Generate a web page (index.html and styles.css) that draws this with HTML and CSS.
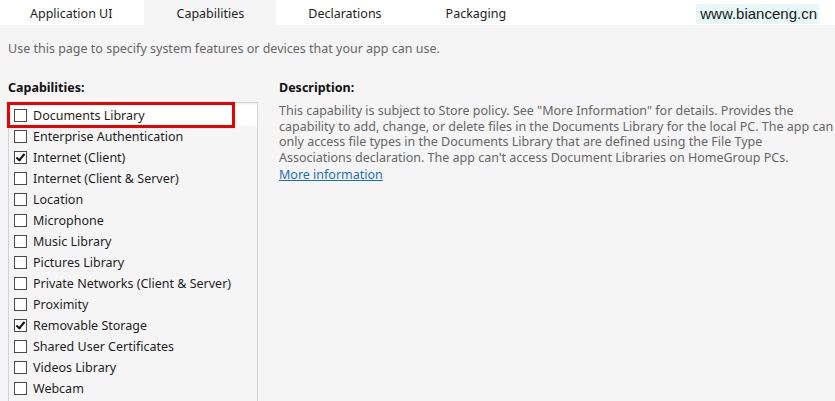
FILE: index.html
```html
<!DOCTYPE html>
<html lang="en">
<head>
    <meta charset="UTF-8">
    <title>Package.appxmanifest - Capabilities</title>
    <link rel="stylesheet" href="styles.css">
</head>
<body>

    <!-- Manifest designer tabs -->
    <div class="tabs">
        <div class="tab">Application UI</div>
        <div class="tab active">Capabilities</div>
        <div class="tab">Declarations</div>
        <div class="tab">Packaging</div>
        <div class="watermark">www.bianceng.cn</div>
    </div>

    <p class="intro">Use this page to specify system features or devices that your app can use.</p>

    <div class="panes">
        <div class="caps">
            <div class="heading">Capabilities:</div>
            <div class="cap-list">
                <div class="cap selected"><span class="check"></span>Documents Library</div>
                <div class="cap"><span class="check"></span>Enterprise Authentication</div>
                <div class="cap"><span class="check on"></span>Internet (Client)</div>
                <div class="cap"><span class="check"></span>Internet (Client &amp; Server)</div>
                <div class="cap"><span class="check"></span>Location</div>
                <div class="cap"><span class="check"></span>Microphone</div>
                <div class="cap"><span class="check"></span>Music Library</div>
                <div class="cap"><span class="check"></span>Pictures Library</div>
                <div class="cap"><span class="check"></span>Private Networks (Client &amp; Server)</div>
                <div class="cap"><span class="check"></span>Proximity</div>
                <div class="cap"><span class="check on"></span>Removable Storage</div>
                <div class="cap"><span class="check"></span>Shared User Certificates</div>
                <div class="cap"><span class="check"></span>Videos Library</div>
                <div class="cap"><span class="check"></span>Webcam</div>

                <!-- red highlight drawn over the first item -->
                <div class="highlight"></div>
            </div>
        </div>

        <div class="desc">
            <div class="heading">Description:</div>
            <p class="desc-text">
                This capability is subject to Store policy. See "More Information" for details. Provides the<br>
                capability to add, change, or delete files in the Documents Library for the local PC. The app can<br>
                only access file types in the Documents Library that are defined using the File Type<br>
                Associations declaration. The app can't access Document Libraries on HomeGroup PCs.
            </p>
            <a class="more" href="#">More information</a>
        </div>
    </div>

</body>
</html>
```

FILE: styles.css
```css
body {
    margin: 0;
    padding: 0;
    background-color: #f5f5f5;
    font-family: "Noto Sans", "Open Sans", sans-serif;
    font-size: 12.5px;
    color: #222;
    overflow: hidden;
}

/* Tab strip */
.tabs {
    display: flex;
    align-items: stretch;
    height: 25px;
    background-color: #ffffff;
}

.tab {
    padding: 2px 32px 0 32px;
    line-height: 23px;
    font-size: 12.5px;
    color: #1e1e1e;
}

.tab:first-child {
    padding-left: 30px;
}

.tab.active {
    background-color: #f5f5f5;
}

.watermark {
    margin: 4px 16px 1px auto;
    padding: 0 2px 0 4px;
    line-height: 20px;
    background-color: #e8f7f7;
    font-family: "Liberation Sans", Arial, sans-serif;
    font-size: 15px;
    color: #1a1a1a;
}

.intro {
    margin: 16px 0 0 8px;
    line-height: 16px;
    color: #666;
}

/* Two panes */
.panes {
    display: grid;
    grid-template-columns: 250px 1fr;
    gap: 21px;
    margin-top: 23px;
    padding-left: 8px;
}

.heading {
    font-weight: bold;
    line-height: 16px;
    color: #111;
}

.cap-list {
    position: relative;
    margin-top: 6px;
    padding-top: 2px;
    height: 296px;
    border: 1px solid #d0d0de;
    border-bottom: none;
}

.cap {
    display: flex;
    align-items: center;
    height: 21px;
    padding-left: 5px;
    color: #1e1e1e;
}

.cap.selected {
    background-color: #ffffff;
}

.check {
    width: 11px;
    height: 11px;
    margin-right: 6px;
    border: 1px solid #4a4a4a;
    background-color: #ffffff;
    position: relative;
}

/* tick mark */
.check.on::after {
    content: "";
    position: absolute;
    left: 3px;
    top: 0;
    width: 3px;
    height: 7px;
    border: solid #111;
    border-width: 0 2px 2px 0;
    transform: rotate(40deg);
}

.highlight {
    position: absolute;
    left: -2px;
    top: -1px;
    width: 222px;
    height: 20px;
    border: 3px solid #ee0000;
}

.desc-text {
    margin: 7px 0 0 0;
    line-height: 15.7px;
    color: #666;
    white-space: nowrap;
}

.more {
    display: inline-block;
    margin-top: 1px;
    line-height: 16px;
    color: #1a6fc4;
}
```
